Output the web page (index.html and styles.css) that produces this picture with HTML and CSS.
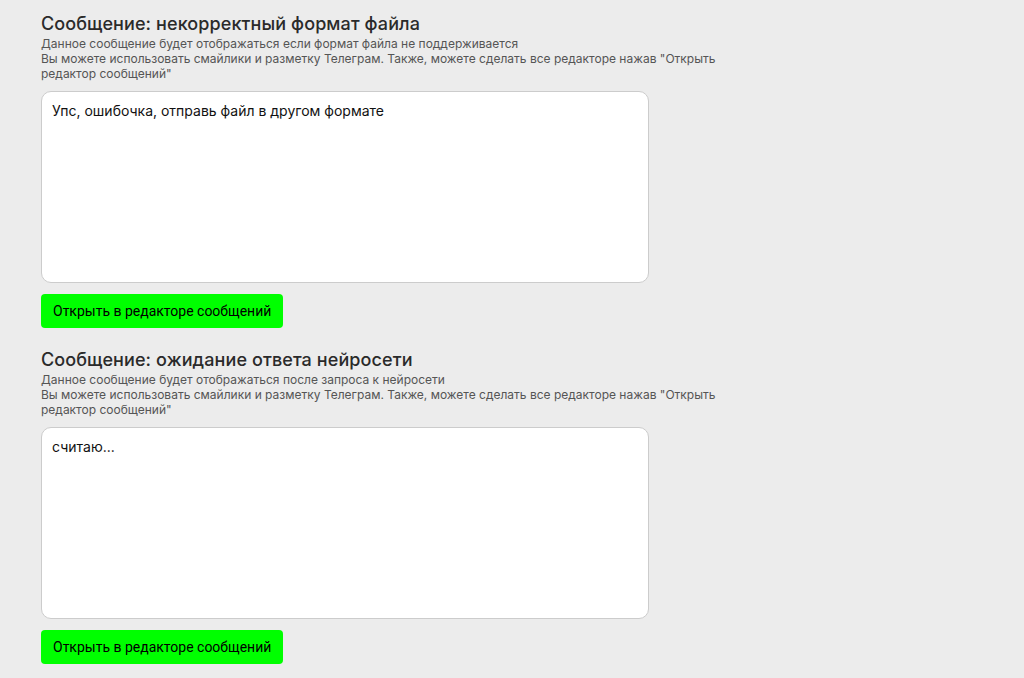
FILE: index.html
```html
<!DOCTYPE html>
<html lang="ru">
<head>
    <meta charset="UTF-8">
    <meta name="viewport" content="width=device-width, initial-scale=1.0">
    <title>Сообщения</title>
    <link rel="stylesheet" href="styles.css">
</head>
<body>
    <div class="settings">
        <div class="message-block">
            <h2 class="message-title">Сообщение: некорректный формат файла</h2>
            <p class="message-desc">Данное сообщение будет отображаться если формат файла не поддерживается<br>Вы можете использовать смайлики и разметку Телеграм. Также, можете сделать все редакторе нажав "Открыть редактор сообщений"</p>
            <textarea class="message-input">Упс, ошибочка, отправь файл в другом формате</textarea>
            <button class="editor-button">Открыть в редакторе сообщений</button>
        </div>

        <div class="message-block">
            <h2 class="message-title">Сообщение: ожидание ответа нейросети</h2>
            <p class="message-desc">Данное сообщение будет отображаться после запроса к нейросети<br>Вы можете использовать смайлики и разметку Телеграм. Также, можете сделать все редакторе нажав "Открыть редактор сообщений"</p>
            <textarea class="message-input">считаю...</textarea>
            <button class="editor-button">Открыть в редакторе сообщений</button>
        </div>
    </div>
</body>
</html>
```

FILE: styles.css
```css
body {
    margin: 0;
    background: #ececec;
    font-family: Inter, "Noto Sans", sans-serif;
    color: #222;
}
.settings {
    padding: 13px 0 0 41px;
}
.message-block {
    display: flex;
    flex-direction: column;
    align-items: flex-start;
    margin-bottom: 21px;
}
.message-title {
    margin: 0;
    font-size: 18px;
    font-weight: 500;
    letter-spacing: 0.1px;
    color: #2a2a2a;
}
.message-desc {
    margin: 2px 0 0;
    max-width: 680px;
    font-size: 12px;
    color: #555;
}
.message-input {
    box-sizing: border-box;
    width: 608px;
    height: 192px;
    margin-top: 10px;
    padding: 10px;
    border: 1px solid #ccc;
    border-radius: 10px;
    background: white;
    font-family: Inter, "Noto Sans", sans-serif;
    font-size: 14px;
    color: #111;
    resize: none;
    outline: none;
}
.editor-button {
    margin-top: 11px;
    height: 34px;
    padding: 0 12px;
    border: none;
    border-radius: 4px;
    background: #00ff00;
    color: #000;
    font-family: Roboto, sans-serif;
    font-size: 14px;
    cursor: pointer;
}
```
